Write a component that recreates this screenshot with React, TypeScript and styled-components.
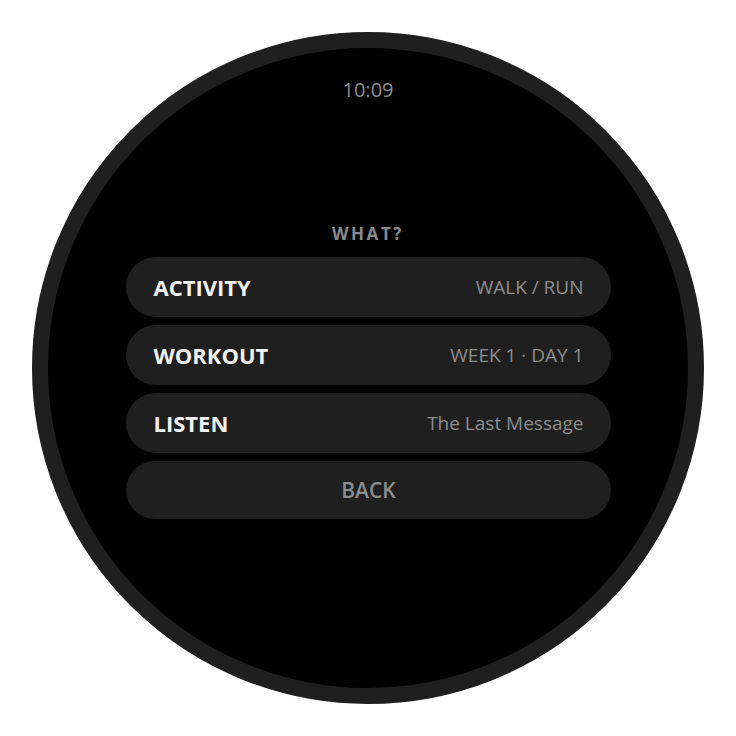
import styled, { createGlobalStyle } from 'styled-components';

const GlobalStyle = createGlobalStyle`
  html, body {
    margin: 0;
    padding: 0;
    background: #ffffff;
  }
  body {
    font-family: "Open Sans", "Noto Sans", "Liberation Sans", sans-serif;
  }
`;

const Screen = styled.div`
  width: 736px;
  height: 736px;
  display: flex;
  align-items: center;
  justify-content: center;
`;

const Watch = styled.div`
  width: 672px;
  height: 672px;
  box-sizing: border-box;
  border-radius: 50%;
  border: 16px solid #1f1f1f;
  background: #000000;
  display: flex;
  flex-direction: column;
  align-items: center;
  padding-top: 28px;
`;

const Clock = styled.div`
  color: #8c8c8c;
  font-size: 20px;
  line-height: 27px;
  font-weight: 400;
`;

const Menu = styled.div`
  margin-top: 120px;
  display: flex;
  flex-direction: column;
  align-items: center;
`;

const Heading = styled.div`
  color: #8a8a8a;
  font-size: 17px;
  line-height: 22px;
  font-weight: 700;
  letter-spacing: 2.6px;
  margin-bottom: 12px;
`;

const List = styled.div`
  display: flex;
  flex-direction: column;
  gap: 8px;
  width: 485px;
`;

const Row = styled.div<{ $height?: number; $center?: boolean }>`
  height: ${({ $height }) => $height ?? 60}px;
  border-radius: 30px;
  background: #1f1f1f;
  box-sizing: border-box;
  padding: 0 27px 0 28px;
  display: flex;
  align-items: center;
  justify-content: ${({ $center }) => ($center ? 'center' : 'space-between')};
`;

const Label = styled.span`
  color: #f2f2f2;
  font-size: 22px;
  font-weight: 700;
`;

const Value = styled.span`
  color: #8c8c8c;
  font-size: 19px;
  font-weight: 400;
`;

const BackText = styled.span`
  color: #8c8c8c;
  font-size: 21px;
  font-weight: 600;
`;

const items = [
  { label: 'ACTIVITY', value: 'WALK / RUN' },
  { label: 'WORKOUT', value: 'WEEK 1 · DAY 1' },
  { label: 'LISTEN', value: 'The Last Message' },
];

export default function App(): JSX.Element {
  return (
    <>
      <GlobalStyle />
      <Screen>
        <Watch>
          <Clock>10:09</Clock>
          <Menu>
            <Heading>WHAT?</Heading>
            <List>
              {items.map((item) => (
                <Row key={item.label}>
                  <Label>{item.label}</Label>
                  <Value>{item.value}</Value>
                </Row>
              ))}
              <Row $height={58} $center>
                <BackText>BACK</BackText>
              </Row>
            </List>
          </Menu>
        </Watch>
      </Screen>
    </>
  );
}
